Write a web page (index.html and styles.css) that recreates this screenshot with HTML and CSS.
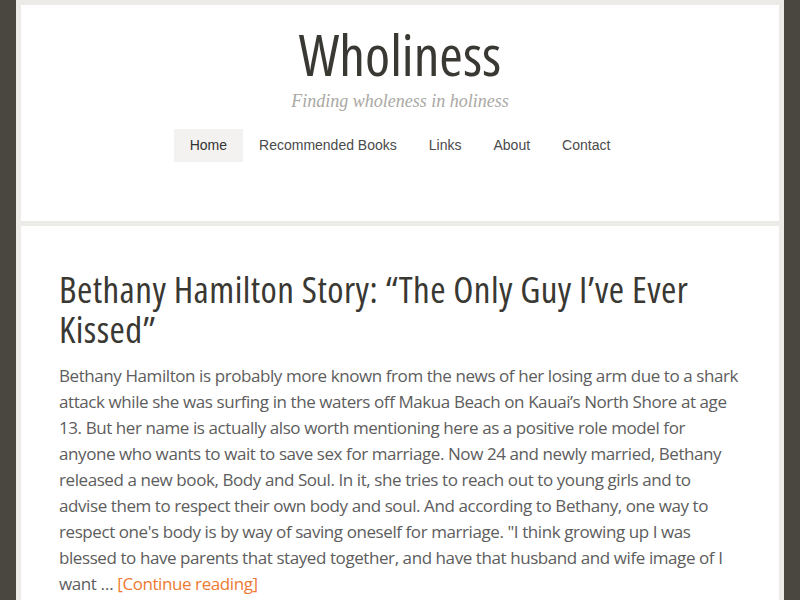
FILE: index.html
```html
<!DOCTYPE html>
<html lang="en">
<head>
<meta charset="utf-8">
<title>Wholiness</title>
<link rel="stylesheet" href="styles.css">
</head>
<body>
<div class="site">
  <header class="masthead">
    <h1 class="site-title">Wholiness</h1>
    <p class="tagline">Finding wholeness in holiness</p>
    <nav class="menu">
      <a class="menu-item current" href="#">Home</a>
      <a class="menu-item" href="#">Recommended Books</a>
      <a class="menu-item" href="#">Links</a>
      <a class="menu-item" href="#">About</a>
      <a class="menu-item" href="#">Contact</a>
    </nav>
  </header>
  <main class="content">
    <article class="post">
      <h2 class="post-title">Bethany Hamilton Story: “The Only Guy I’ve Ever Kissed”</h2>
      <p class="excerpt">Bethany Hamilton is probably more known from the news of her losing arm due to a shark attack while she was surfing in the waters off Makua Beach on Kauai’s North Shore at age 13. But her name is actually also worth mentioning here as a positive role model for anyone who wants to wait to save sex for marriage. Now 24 and newly married, Bethany released a new book, Body and Soul. In it, she tries to reach out to young girls and to advise them to respect their own body and soul. And according to Bethany, one way to respect one's body is by way of saving oneself for marriage. "I think growing up I was blessed to have parents that stayed together, and have that husband and wife image of I want … <a class="more" href="#">[Continue reading]</a></p>
    </article>
  </main>
</div>
</body>
</html>
```

FILE: styles.css
```css
html, body {
  margin: 0;
  padding: 0;
}
body {
  background: #4a4740;
  font-family: "Open Sans", "Liberation Sans", sans-serif;
  height: 600px;
  overflow: hidden;
}
.site {
  width: 758px;
  margin: 0 auto;
  padding: 5px 5px 0;
  background: #edebe7;
  min-height: 600px;
}
.masthead {
  background: #fff;
  height: 216px;
  text-align: center;
  overflow: hidden;
}
.site-title {
  margin: 0;
  padding-top: 18px;
  font-family: "Open Sans", sans-serif;
  font-stretch: 75%;
  font-weight: 500;
  font-size: 57px;
  line-height: 62px;
  color: #3a3833;
}
.tagline {
  margin: 5px 0 0;
  font-family: "Liberation Serif", serif;
  font-style: italic;
  font-size: 18px;
  line-height: 22px;
  color: #aaa8a4;
}
.menu {
  display: flex;
  justify-content: center;
  margin-top: 17px;
}
.menu-item {
  font-family: "Liberation Sans", Arial, sans-serif;
  font-size: 14px;
  line-height: 33px;
  padding: 0 16px;
  color: #4a4a4a;
  text-decoration: none;
}
.menu-item.current {
  background: #f3f2f0;
  color: #333;
}
.content {
  background: #fff;
  margin-top: 5px;
  padding: 43px 38px 40px;
}
.post-title {
  margin: 0;
  font-family: "Open Sans", sans-serif;
  font-stretch: 75%;
  font-weight: normal;
  font-size: 37px;
  letter-spacing: 0.45px;
  line-height: 40px;
  color: #3a3833;
}
.excerpt {
  margin: 14px 0 0;
  font-size: 17px;
  letter-spacing: -0.42px;
  line-height: 26px;
  color: #5d5d5d;
}
.more {
  color: #ed7a33;
  text-decoration: none;
}
```
